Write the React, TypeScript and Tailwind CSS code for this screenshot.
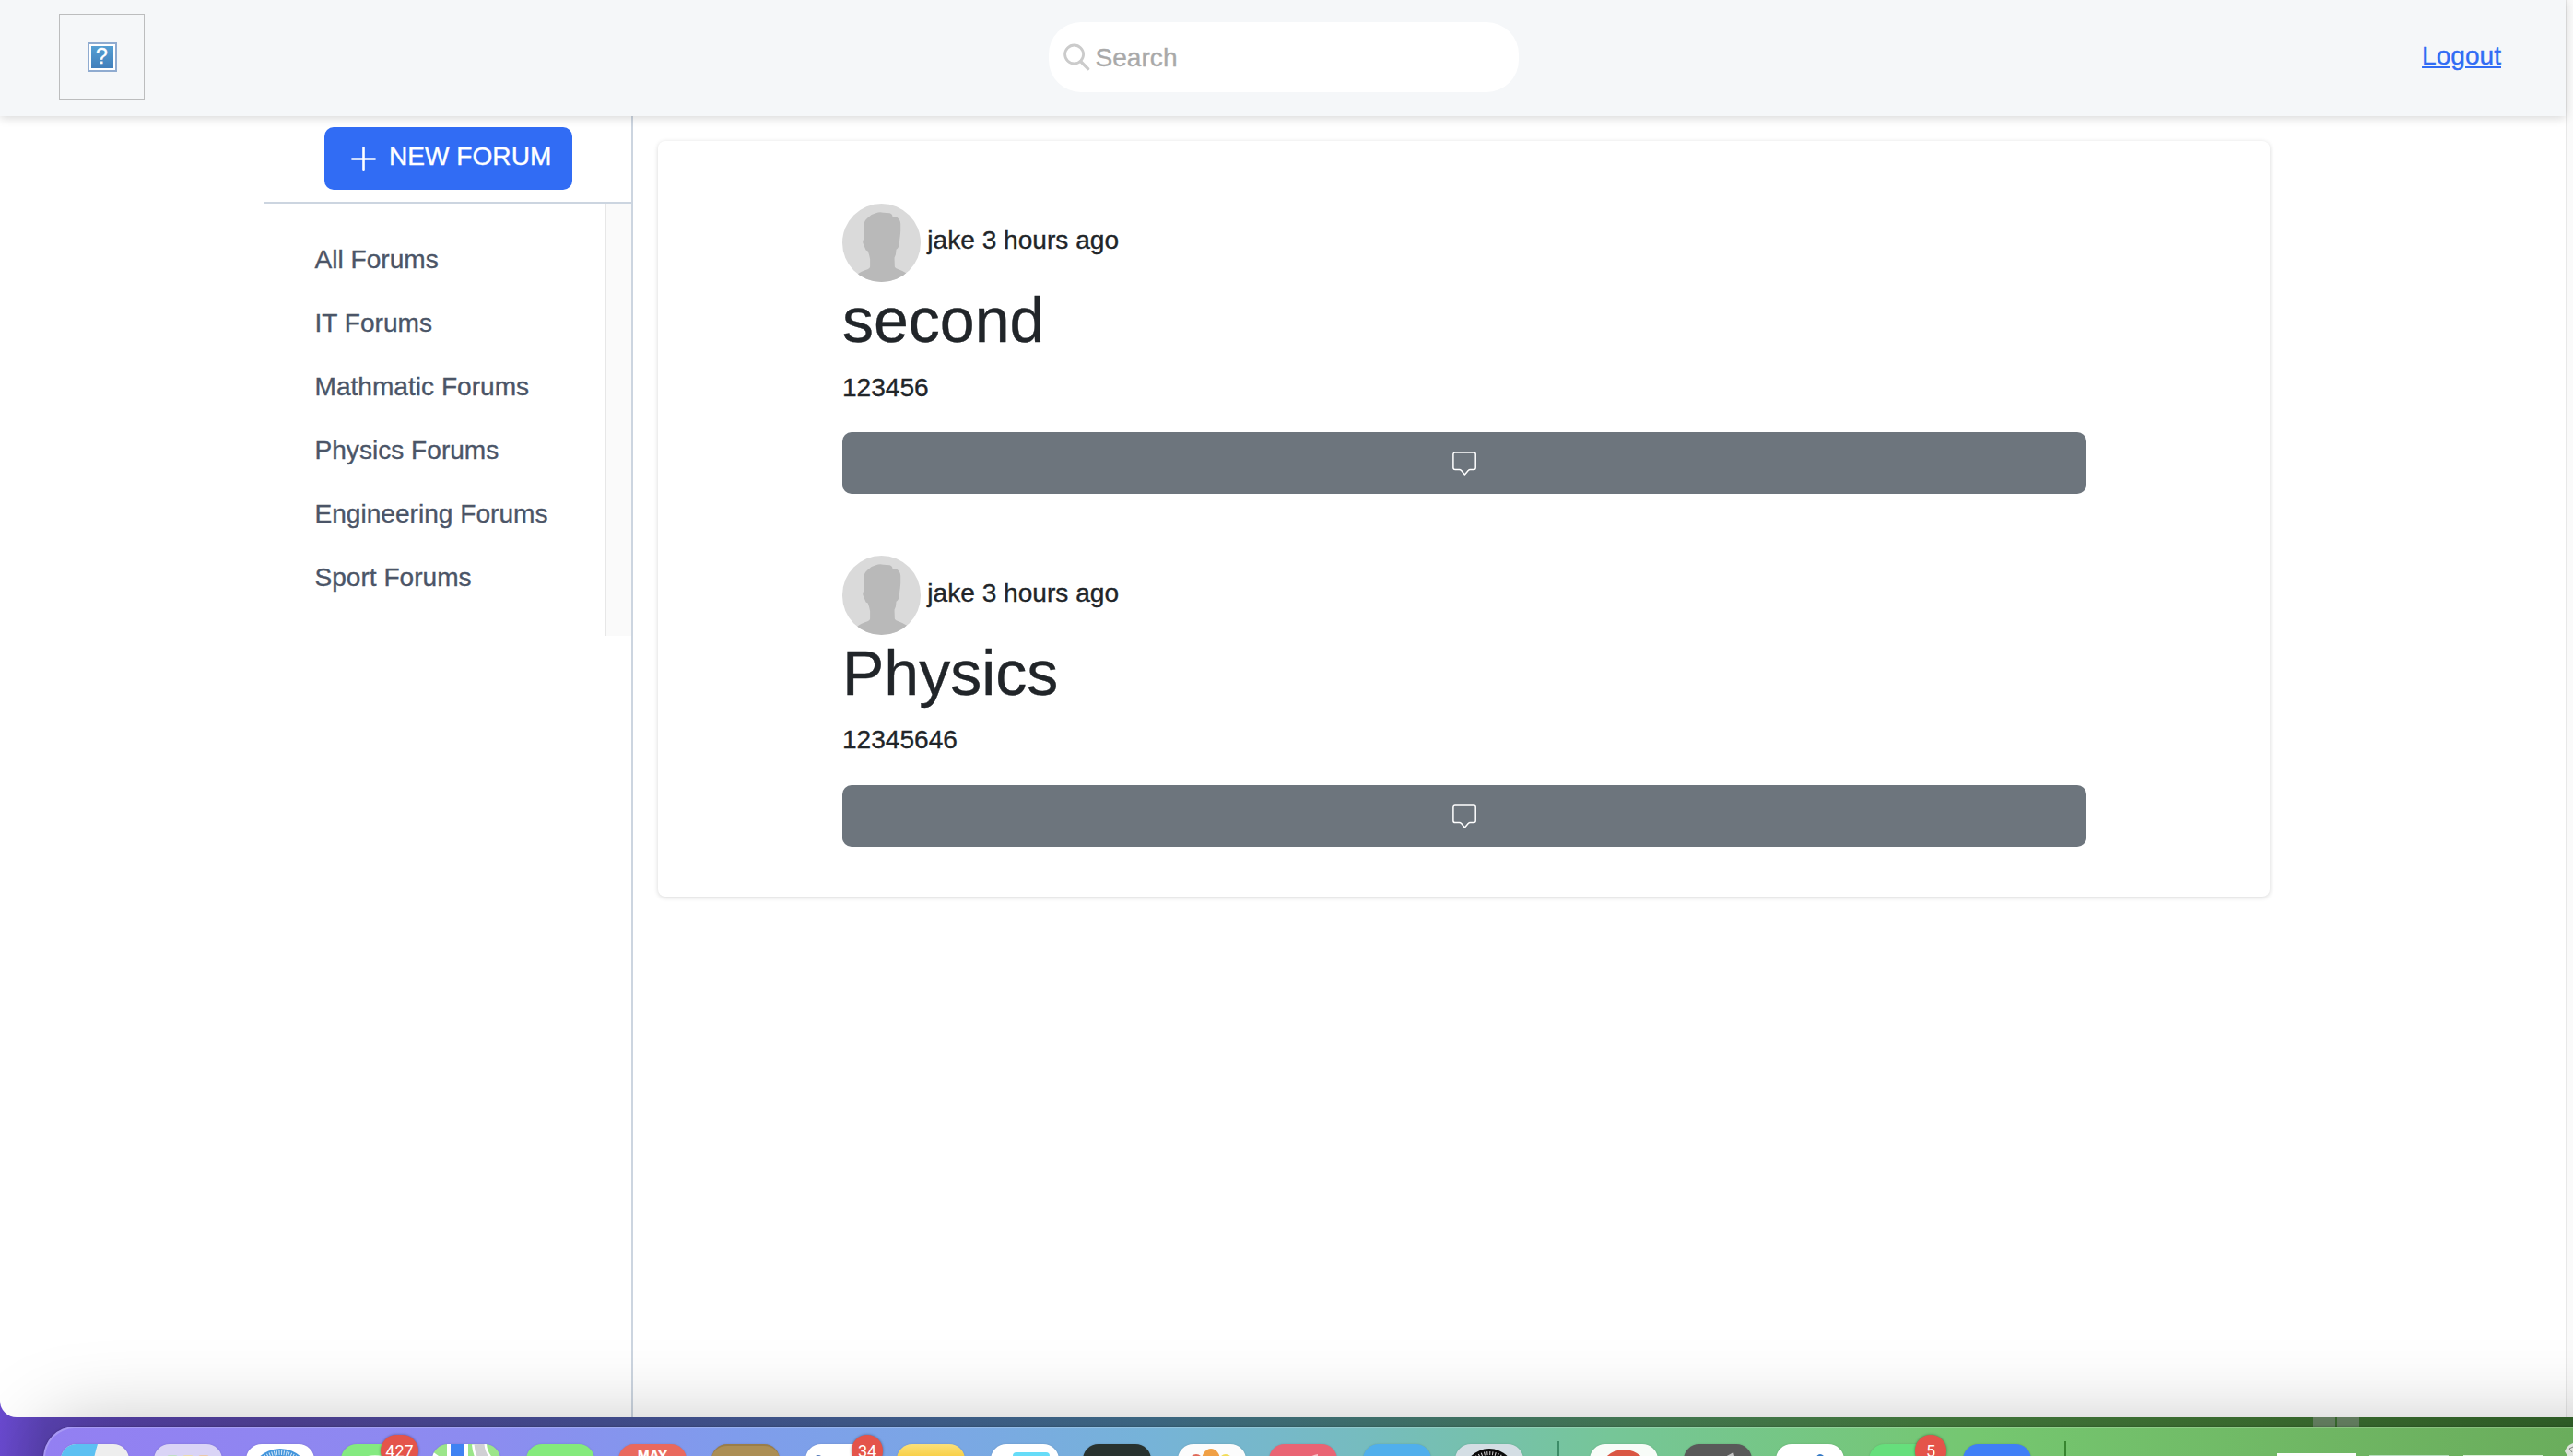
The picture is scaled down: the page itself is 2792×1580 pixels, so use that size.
import type { ReactNode } from 'react';

const categories = [
  'All Forums',
  'IT Forums',
  'Mathmatic Forums',
  'Physics Forums',
  'Engineering Forums',
  'Sport Forums',
];

const posts = [
  { author: 'jake', age: '3 hours ago', title: 'second', body: '123456' },
  { author: 'jake', age: '3 hours ago', title: 'Physics', body: '12345646' },
];

function BrokenImage() {
  return (
    <div className="flex h-[93px] w-[93px] items-center justify-center border border-[#bcbdbe]">
      <div className="flex h-8 w-8 border-2 border-[#8fabd0] bg-white p-[2px]">
        <div className="flex flex-1 items-center justify-center bg-linear-to-b from-[#559fd3] to-[#417fbb] text-[23px] leading-none text-white">
          ?
        </div>
      </div>
    </div>
  );
}

function Header() {
  return (
    <header className="relative z-10 flex h-[126px] w-[2784px] shrink-0 items-center justify-between bg-[#f5f7f9] pr-[70px] pl-16 shadow-[0_2px_10px_rgba(0,0,0,0.16)]">
      <div className="flex w-[200px] pb-[3px]">
        <BrokenImage />
      </div>
      <div className="mb-[2px] ml-[7px] flex h-[76px] w-[510px] items-center rounded-[35px] bg-white pl-4">
        <svg className="h-[30px] w-[30px]" viewBox="0 0 30 30" fill="none" stroke="#cbcbcb">
          <circle cx="11.6" cy="12" r="10" strokeWidth="2.8" />
          <path d="M18.8 19.8 L26.6 27.6" strokeWidth="3.4" strokeLinecap="round" />
        </svg>
        <span className="pt-[1px] pl-[5px] text-[#a9a9a9]">Search</span>
      </div>
      <div className="flex w-[200px] justify-end pb-[4px]">
        <a className="text-[#316cf4] underline decoration-2 underline-offset-[2px]">Logout</a>
      </div>
    </header>
  );
}

function Sidebar() {
  return (
    <aside className="flex w-[400px] shrink-0 flex-col border-r-2 border-[#ccd5e0]">
      <div className="flex h-[95px] items-start justify-center border-b-2 border-[#ccd5e0] pt-3 pl-[1px]">
        <button className="mr-[1px] flex h-[68px] w-[269px] items-center rounded-[10px] bg-[#316cf4] pl-[29px] text-white">
          <svg className="mt-[1px] h-[27px] w-[27px]" viewBox="0 0 27 27" stroke="white" strokeWidth="2.6" strokeLinecap="round">
            <path d="M13.5 1.3v24.4M1.3 13.5h24.4" />
          </svg>
          <span className="pb-[4px] pl-[14.5px]">NEW FORUM</span>
        </button>
      </div>
      <div className="flex h-[469px]">
        <nav className="flex flex-1 flex-col pt-[26px] pl-[54.5px]">
          {categories.map((name) => (
            <a key={name} className="flex h-[69.1px] items-center text-[#4b5567]">
              {name}
            </a>
          ))}
        </nav>
        <div className="w-[29px] border-l-2 border-[#e7e7e7] bg-[#fafafa]" />
      </div>
    </aside>
  );
}

function Avatar() {
  return (
    <svg className="h-[85.3px] w-[85.3px] shrink-0 rounded-full" viewBox="0 0 255 255">
      <rect width="255" height="255" fill="#dadada" />
      <path
        fill="#b9b9b9"
        d="M90 180 Q88 168 83 154 Q75 152 74 145 L67 128 Q65 117 71 116 L69 105 L69 72 Q70 55 82 46 Q94 34 109 31 Q121 25 133 29 L154 31 Q163 34 163 43 Q170 40 177 44 Q189 52 189 66 L189 88 Q188 104 186 116 L185 128 Q184 145 175 149 Q175 165 169 176 L170 205 Q172 210 180 212 Q198 218 212 228 L255 262 L0 262 L48 230 Q60 220 82 213 Q90 210 90 205 Z"
      />
    </svg>
  );
}

function CommentIcon() {
  return (
    <svg className="mt-[1px] h-[26px] w-[26px]" viewBox="0 0 26 26" fill="none" stroke="white" strokeWidth="1.5" strokeLinejoin="round">
      <path d="M3 .9h20.2a2 2 0 0 1 2 2v14.7a2 2 0 0 1-2 2h-3.8q-1.4 0-2.2 1L13.4 25l-3.7-4.4q-.8-1-2.2-1H3a2.100 2.100 0 0 1-2.100-2V2.900a2 2 0 0 1 2.100-2z" />
    </svg>
  );
}

function Feed() {
  return (
    <section className="mt-[27px] ml-[27px] flex h-[820px] w-[1749px] flex-col gap-[67.05px] rounded-lg bg-white px-[200px] pt-[68px] shadow-[0_1px_5px_rgba(0,0,0,0.16)]">
      {posts.map((post) => (
        <article key={post.title} className="flex flex-col text-[#212529]">
          <div className="flex h-[85.3px] items-center">
            <Avatar />
            <span className="pb-[4.500px] pl-[7px]">
              {post.author} {post.age}
            </span>
          </div>
          <h1 className="pt-[1px] text-[68px] leading-[80.7px]">{post.title}</h1>
          <p className="mt-[11.5px] mb-[-1px] leading-[42.5px]">{post.body}</p>
          <button className="mt-[28.2px] flex h-[67.2px] w-[1350px] items-center justify-center rounded-[10px] bg-[#6d757d]">
            <CommentIcon />
          </button>
        </article>
      ))}
    </section>
  );
}

function Tile({ x, className, children }: { x: number; className: string; children?: ReactNode }) {
  return (
    <div
      className={`absolute top-[19px] h-[74px] w-[74px] overflow-hidden rounded-[17px] shadow-[0_0_2px_rgba(0,0,0,0.15)] ${className}`}
      style={{ left: x - 47 }}
    >
      {children}
    </div>
  );
}

function Badge({ x, className, children }: { x: number; className: string; children: ReactNode }) {
  return (
    <div
      className={`absolute flex h-[35px] items-center justify-center rounded-full bg-[#e4544a] font-['Roboto','Liberation_Sans',sans-serif] text-[18px] leading-none text-white shadow-[0_0_3px_rgba(0,0,0,0.4)] [-webkit-text-stroke:0px] ${className}`}
      style={{ left: x - 47 }}
    >
      {children}
    </div>
  );
}

function Dock() {
  return (
    <div className="absolute top-[1548px] left-[47px] z-20 h-[32px] w-[2745px]">
      <div className="absolute top-0 left-0 h-[110px] w-[2880px] rounded-[34px] border-t-2 border-l-2 border-white/20 bg-[linear-gradient(90deg,#937ff2_0px,#8c8cf0_480px,#7f9cec_750px,#7aa8e4_1000px,#76b3d8_1200px,#76bcbf_1430px,#76c698_1700px,#75c770_2100px,#6fb663_2480px,#6aad5c_2745px)] bg-origin-border shadow-[0_0_90px_rgba(0,0,0,0.26),0_0_2px_rgba(0,0,0,0.4)]" />

      <Tile x={66} className="bg-[#eeeeee]">
        <svg className="h-full w-full" viewBox="0 0 74 74">
          <path d="M0 0H40Q34 20 32 40H0Z" fill="#5cc0f2" />
        </svg>
      </Tile>
      <Tile x={167} className="bg-[#dad4f6]">
        <svg className="h-full w-full" viewBox="0 0 74 74">
          <rect x="14" y="12" width="12" height="12" rx="3" fill="#c0dfc4" />
          <rect x="31" y="12" width="12" height="12" rx="3" fill="#ecdcae" />
          <rect x="48" y="12" width="12" height="12" rx="3" fill="#ecc9a8" />
        </svg>
      </Tile>
      <Tile x={267} className="bg-white">
        <svg className="h-full w-full" viewBox="0 0 74 74">
          <circle cx="37" cy="38" r="33" fill="#4596dc" />
          <circle cx="37" cy="38" r="28.500" fill="none" stroke="#d5e8f8" strokeWidth="5" strokeDasharray="1 1.6" />
        </svg>
      </Tile>
      <Tile x={370} className="bg-[#84ea80]">
        <svg className="h-full w-full" viewBox="0 0 74 74">
          <ellipse cx="37" cy="34" rx="26" ry="22" fill="#d9f9d8" />
        </svg>
      </Tile>
      <Badge x={413} className="top-[9px] w-[41px]">427</Badge>
      <Tile x={469} className="bg-[#9be58a]">
        <svg className="h-full w-full" viewBox="0 0 74 74">
          <path d="M0 8L14 18V40H0Z" fill="#ffffff" />
          <rect x="16" y="0" width="23" height="74" fill="#ffffff" />
          <rect x="20" y="0" width="15" height="74" fill="#3f82f2" />
          <path d="M51 0Q52 16 66 26" fill="none" stroke="#ffffff" strokeWidth="16" />
          <path d="M51 0Q52 16 66 26" fill="none" stroke="#d0d0d4" strokeWidth="11" />
        </svg>
      </Tile>
      <Tile x={571} className="bg-[#84ea7c]" />
      <Tile x={671} className="bg-[#e9695e]">
        <div className="pt-[5px] text-center text-[15px] leading-[14px] font-bold text-white">MAY</div>
      </Tile>
      <Tile x={772} className="border-t-2 border-[#9a7d48] bg-[#ac8e54]" />
      <Tile x={874} className="bg-white">
        <svg className="h-full w-full" viewBox="0 0 74 74">
          <circle cx="14" cy="17" r="5" fill="#5478b8" />
        </svg>
      </Tile>
      <Badge x={924} className="top-[9px] w-[34px]">34</Badge>
      <Tile x={973} className="bg-[linear-gradient(180deg,#fbe07a_0px,#f8cf45_14px,#f3c32c_74px)]" />
      <Tile x={1075} className="bg-white">
        <div className="mt-[9px] ml-[24px] h-5 w-[40px] rounded-[4px] bg-[#66dcf8]" />
      </Tile>
      <Tile x={1175} className="bg-[#28322f]" />
      <Tile x={1278} className="bg-[#fcfcfc]">
        <svg className="h-full w-full" viewBox="0 0 74 74">
          <circle cx="20" cy="18" r="7" fill="#e06a58" />
          <circle cx="52" cy="18" r="7" fill="#f2dc58" />
          <ellipse cx="36" cy="18" rx="10" ry="13" fill="#f0a045" />
        </svg>
      </Tile>
      <Tile x={1377} className="bg-[#e96474]">
        <svg className="h-full w-full" viewBox="0 0 74 74">
          <path d="M41 16Q47 12 53 11V24H50V15Z" fill="#f7c4ca" />
        </svg>
      </Tile>
      <Tile x={1479} className="bg-[#50afec]" />
      <Tile x={1579} className="bg-[#d4dee4]">
        <svg className="h-full w-full" viewBox="0 0 74 74">
          <circle cx="37" cy="33" r="28" fill="#0b0b0b" />
          <circle cx="37" cy="33" r="23" fill="none" stroke="#d8d8d8" strokeWidth="4" strokeDasharray="1 2" />
          <circle cx="37" cy="33" r="19" fill="#dcdcdc" />
        </svg>
      </Tile>
      <div className="absolute top-[16px] left-[1643px] h-[16px] w-[2px] bg-[#3c8c68]" />
      <Tile x={1725} className="bg-[#f8fcf8]">
        <svg className="h-full w-full" viewBox="0 0 74 74">
          <circle cx="37" cy="33" r="27" fill="#da5744" />
        </svg>
      </Tile>
      <Tile x={1827} className="bg-[#595959]">
        <svg className="h-full w-full" viewBox="0 0 74 74">
          <path d="M32 19Q44 15 54 9L55 13Q47 18 38 21Z" fill="#c4c4c4" />
        </svg>
      </Tile>
      <Tile x={1927} className="bg-white">
        <svg className="h-full w-full" viewBox="0 0 74 74">
          <path d="M43 15Q47 8 52 13L50 22H43Z" fill="#3478c4" />
        </svg>
      </Tile>
      <Tile x={2028} className="bg-[#66df7c]" />
      <Badge x={2078} className="top-[9px] w-[34px]">5</Badge>
      <Tile x={2130} className="bg-[#407ff6]">
        <svg className="h-full w-full" viewBox="0 0 74 74">
          <path d="M52 18L62 14V20Z" fill="#a8c8ff" />
        </svg>
      </Tile>
      <div className="absolute top-[16px] left-[2193px] h-[16px] w-[2px] bg-[#37852f]" />
      <div className="absolute top-[29px] left-[2424px] h-[3px] w-[86px] bg-[#fdfdfd]" />
      <div className="absolute top-[31px] left-[2524px] h-[1px] w-[86px] bg-[#b9dfc0]" />
      <div className="absolute top-[31px] left-[2626px] h-[1px] w-[86px] bg-[#d8efd6]" />
      <svg className="absolute top-[16px] left-[2736px] h-[16px] w-[9px]" viewBox="0 0 9 16">
        <path d="M9 2L5 4L2 7L0 11L3 16H9Z" fill="#dfe3de" />
        <path d="M9 6L5 8L8 12" stroke="#7c827b" fill="none" />
      </svg>
    </div>
  );
}

export default function App() {
  return (
    <div className="relative h-[1580px] w-[2792px] overflow-hidden bg-[linear-gradient(90deg,#6a4ad0_0px,#5b43b4_50px,#54449f_300px,#48539a_650px,#446596_1000px,#437290_1250px,#457b78_1480px,#4a8458_1800px,#488241_2100px,#407634_2450px,#34672b_2792px)] font-['Liberation_Sans',Arial,sans-serif] text-[28.1px] leading-[42px] [-webkit-text-stroke:0.35px]">
      <div className="flex h-[1538px] w-[2792px] overflow-hidden rounded-bl-[18px] bg-white">
        <div className="flex w-[2784px] flex-col">
          <Header />
          <div className="flex flex-1 pl-[287px]">
            <Sidebar />
            <Feed />
          </div>
        </div>
        <div className="w-[8px] border-l-2 border-[#e8e8e8] bg-[#fafafa]" />
      </div>
      <div className="flex h-[10px] gap-[2px] pl-[2510px]">
        <div className="w-[24px] bg-[#6d8a69]" />
        <div className="w-[24px] bg-[#6d8a69]" />
      </div>
      <Dock />
    </div>
  );
}
